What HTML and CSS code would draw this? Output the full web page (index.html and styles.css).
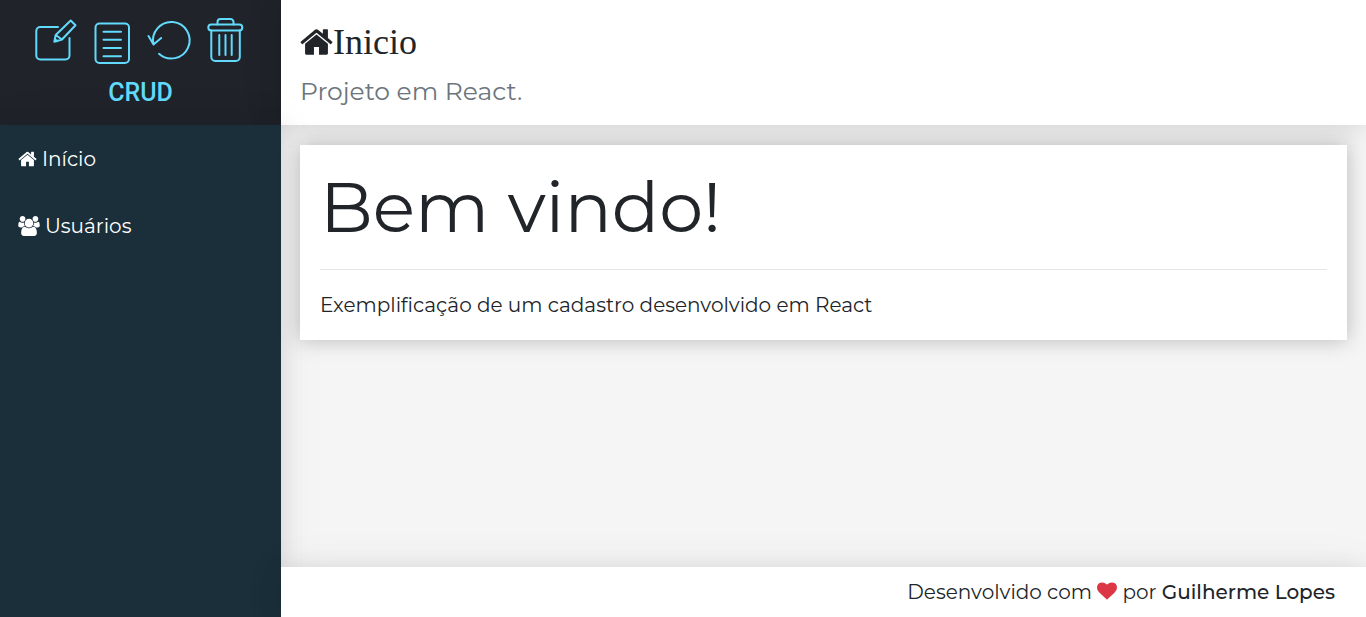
FILE: index.html
```html
<!DOCTYPE html>
<html lang="pt-BR">
<head>
<meta charset="utf-8">
<meta name="viewport" content="width=device-width, initial-scale=1">
<title>CRUD</title>
<link rel="stylesheet" href="styles.css">
</head>
<body>
<svg class="defs" aria-hidden="true">
  <symbol id="home" viewBox="0 0 1664 1792"><path d="M1408 992v480q0 26-19 45t-45 19h-384v-384h-256v384h-384q-26 0-45-19t-19-45v-480q0-1 .5-3t.5-3l575-474 575 474q1 2 1 6zm223-69l-62 74q-8 9-21 11h-3q-13 0-21-7l-692-577-692 577q-12 8-24 7-13-2-21-11l-62-74q-8-10-7-23.500t11-21.500l719-599q32-26 76-26t76 26l244 204v-195q0-14 9-23t23-9h192q14 0 23 9t9 23v408l219 182q10 8 11 21.500t-7 23.500z"/></symbol>
</svg>
<div class="app">
  <div class="logo">
    <a class="logo-link" href="#">
      <svg class="logo-icons" viewBox="0 0 211 48" aria-hidden="true">
        <path d="M23 10H5.300a4 4 0 0 0-4 4v24.500a4 4 0 0 0 4 4h25.200a4 4 0 0 0 4-4V21"/>
        <path d="M19.300 24.700l1.400-6.700 15-14.500 4.800 4.700L27 22.500zM20.700 18l6.300 4.500M19.800 22l2.500 2.200"/>
        <rect x="60.500" y="6.500" width="33.500" height="39.500" rx="4"/>
        <path d="M68.500 14.700H86M68.500 22.800H86M68.500 31H86M68.500 39.300H86"/>
        <path d="M124 36.800A18.300 18.300 0 1 0 118.500 27.500M113.500 19l5 8.500 7.700-6.500"/>
        <rect x="173.300" y="7.500" width="34" height="6" rx="3"/>
        <path d="M182.500 7.500V5a3 3 0 0 1 3-3h10a3 3 0 0 1 3 3v2.500M176.300 13.500V40a4 4 0 0 0 4 4h20.500a4 4 0 0 0 4-4V13.500M184.300 18v20M190.500 18v20M196.700 18v20"/>
      </svg>
      <span>CRUD</span>
    </a>
  </div>
  <header class="header">
    <h1 class="title"><svg class="title-icon" aria-hidden="true"><use href="#home"/></svg>Inicio</h1>
    <p class="lead">Projeto em React.</p>
  </header>
  <aside class="menu">
    <nav class="nav">
      <a href="#"><svg class="icon-home" aria-hidden="true"><use href="#home"/></svg>Início</a>
      <a href="#"><svg class="icon-users" viewBox="0 0 1920 1792" aria-hidden="true"><path d="M593 896q-162 5-265 128h-134q-82 0-138-40.500t-56-118.500q0-353 124-353 6 0 43.500 21t97.500 42.500 119 21.500q67 0 133-23-5 37-5 66 0 139 81 256zm1071 637q0 120-73 189.500t-194 69.500h-874q-121 0-194-69.500t-73-189.500q0-53 3.500-103.500t14-109 26.500-108.500 43-97.500 62-81 85.500-53.500 111.500-20q10 0 43 21.500t73 48 107 48 135 21.500 135-21.500 107-48 73-48 43-21.500q61 0 111.500 20t85.500 53.500 62 81 43 97.500 26.500 108.500 14 109 3.500 103.500zm-1024-1277q0 106-75 181t-181 75-181-75-75-181 75-181 181-75 181 75 75 181zm704 384q0 159-112.500 271.500t-271.500 112.500-271.500-112.500-112.500-271.500 112.500-271.500 271.500-112.500 271.500 112.500 112.500 271.500zm576 225q0 78-56 118.500t-138 40.500h-134q-103-123-265-128 81-117 81-256 0-29-5-66 66 23 133 23 59 0 119-21.500t97.500-42.500 43.500-21q124 0 124 353zm-128-609q0 106-75 181t-181 75-181-75-75-181 75-181 181-75 181 75 75 181z"/></svg>Usuários</a>
    </nav>
  </aside>
  <main class="content">
    <section class="card">
      <h2 class="display">Bem vindo!</h2>
      <hr>
      <p>Exemplificação de um cadastro desenvolvido em React</p>
    </section>
  </main>
  <footer class="footer">
    <span>Desenvolvido com <svg class="icon-heart" viewBox="0 0 1792 1792" role="img" aria-label="amor"><path d="M896 1664q-26 0-44-18l-624-602q-10-8-27.500-26t-55.500-65.500-68-97.500-53.500-121-23.500-138q0-220 127-344t351-124q62 0 126.500 21.500t120 58 95.500 68.500 76 68q36-36 76-68t95.500-68.500 120-58 126.500-21.500q224 0 351 124t127 344q0 221-229 450l-623 600q-18 18-44 18z"/></svg> por <strong>Guilherme Lopes</strong></span>
  </footer>
</div>
</body>
</html>
```
FILE: styles.css
```css
:root {
  --shadow: 0 2px 23px 0 rgba(0, 0, 0, 0.1), 0 2px 49px 0 rgba(0, 0, 0, 0.06);
}
* { box-sizing: border-box; }
body {
  margin: 0;
  font-family: Montserrat, Inter, sans-serif;
  font-size: 20px;
  font-weight: 400;
  line-height: 30px;
  color: #212529;
}
h1, h2, p { margin: 0; font-weight: inherit; }
a { text-decoration: none; }
svg { fill: currentColor; }
.defs { position: absolute; width: 0; height: 0; }
.app {
  display: grid;
  grid-template-columns: 281px 1fr;
  grid-template-rows: auto 1fr auto;
  min-height: 100vh;
  background: #f5f5f5;
}
.logo {
  display: flex;
  justify-content: center;
  background: #20232a;
  box-shadow: var(--shadow);
}
.logo-link {
  display: flex;
  flex-direction: column;
  align-items: center;
  padding-top: 17px;
  font-family: Roboto, sans-serif;
  font-size: 25px;
  font-weight: 500;
  color: #61dafb;
}
.logo-icons {
  width: 211px;
  height: 48px;
  margin-bottom: 13px;
  fill: none;
  stroke: currentColor;
  stroke-width: 2;
  stroke-linecap: round;
  stroke-linejoin: round;
}
.header {
  padding: 20px 19px 16px;
  background: #fff;
  box-shadow: var(--shadow);
}
.title {
  display: flex;
  align-items: center;
  margin-bottom: 9px;
  font-family: "Liberation Serif", serif;
  font-size: 36px;
  line-height: 44px;
}
.title-icon { width: 33px; height: 36px; }
.lead { font-size: 25px; line-height: 36px; color: #6c757d; }
.menu {
  grid-row: 2 / 4;
  background: #1b2f3a;
  box-shadow: var(--shadow);
}
.nav { display: flex; flex-direction: column; }
.nav a {
  display: flex;
  align-items: center;
  gap: 5px;
  height: 67px;
  padding-left: 18px;
  color: #fff;
}
.icon-home { width: 19px; height: 20px; }
.icon-users { width: 22px; height: 20px; }
.content { padding: 20px 19px; }
.card {
  padding: 20px;
  background: #fff;
  box-shadow: 0 0 20px rgba(0, 0, 0, 0.25);
}
.display { font-size: 70px; line-height: 84px; }
hr {
  margin: 20px 0;
  border: 0;
  border-top: 1px solid rgba(0, 0, 0, 0.1);
}
.footer {
  display: flex;
  justify-content: flex-end;
  padding: 10px 31px;
  background: #fff;
  box-shadow: var(--shadow);
}
.footer strong { font-weight: 500; }
.icon-heart { width: 20px; height: 20px; vertical-align: -2px; color: #dc3545; }
```
